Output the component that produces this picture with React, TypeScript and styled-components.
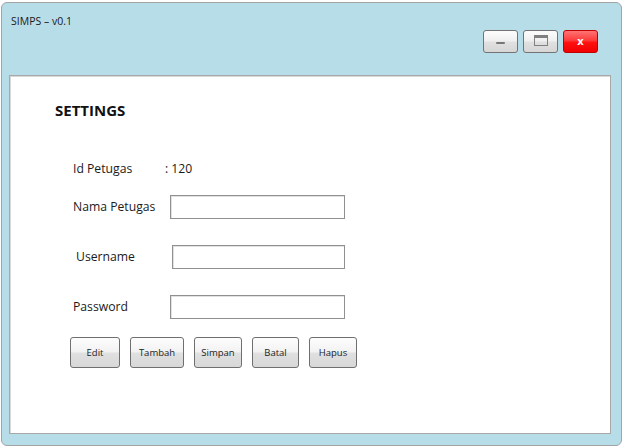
import * as React from 'react';
import styled, { createGlobalStyle } from 'styled-components';

const GlobalStyle = createGlobalStyle`
  html, body {
    margin: 0;
    padding: 0;
    background: #ffffff;
  }
  body {
    font-family: "Open Sans", "Liberation Sans", sans-serif;
    color: #1a1a1a;
  }
`;

export default function App() {
  return (
    <>
      <GlobalStyle />
      <Window>
        <TitleBar>
          <Title>SIMPS – v0.1</Title>
          <Controls>
            <WinButton aria-label="minimize">
              <MinBar />
            </WinButton>
            <WinButton aria-label="maximize">
              <svg width="14" height="11" viewBox="0 0 14 11">
                <rect x="0.5" y="0.5" width="13" height="10" fill="none" stroke="#808080" />
                <rect x="0.5" y="0.5" width="13" height="2.5" fill="#808080" />
              </svg>
            </WinButton>
            <WinButton $danger aria-label="close">x</WinButton>
          </Controls>
        </TitleBar>

        <Panel>
          <Heading>SETTINGS</Heading>
          <Form>
            <Row $indent={63}>
              <Label $width={92}>Id Petugas</Label>
              <Value>: 120</Value>
            </Row>
            <Row $indent={63} $gap={14}>
              <Label $width={97}>Nama Petugas</Label>
              <Field $width={175} />
            </Row>
            <Row $indent={66} $gap={26}>
              <Label $width={96}>Username</Label>
              <Field $width={173} />
            </Row>
            <Row $indent={63} $gap={26}>
              <Label $width={97}>Password</Label>
              <Field $width={175} type="password" />
            </Row>
          </Form>
          <Actions>
            <ActionButton $width={50}>Edit</ActionButton>
            <ActionButton $width={54}>Tambah</ActionButton>
            <ActionButton $width={48}>Simpan</ActionButton>
            <ActionButton $width={47}>Batal</ActionButton>
            <ActionButton $width={48}>Hapus</ActionButton>
          </Actions>
        </Panel>
      </Window>
    </>
  );
}

const Window = styled.div`
  margin: 2px 1px 1px 1px;
  width: 621px;
  height: 444px;
  box-sizing: border-box;
  border: 1px solid #a4a4a4;
  border-radius: 6px;
  background: #b7dde8;
  display: flex;
  flex-direction: column;
`;

const TitleBar = styled.div`
  height: 72px;
  display: flex;
  justify-content: space-between;
  align-items: flex-start;
  padding: 0 23px 0 9px;
`;

const Title = styled.div`
  margin-top: 11px;
  font-size: 10.5px;
  line-height: 14px;
  color: #1a1a1a;
`;

const Controls = styled.div`
  margin-top: 27px;
  display: flex;
  gap: 5px;
`;

const WinButton = styled.button<{ $danger?: boolean }>`
  width: 35px;
  height: 23px;
  box-sizing: border-box;
  padding: 0 0 2px 0;
  display: flex;
  align-items: center;
  justify-content: center;
  border-radius: 3px;
  border: 1px solid ${(p) => (p.$danger ? '#c00000' : '#737373')};
  background: ${(p) =>
    p.$danger
      ? 'linear-gradient(#ff7474, #ff3a3a 45%, #ff1010 55%, #f00000)'
      : 'linear-gradient(#fdfdfd, #f0f0f0 45%, #e0e0e0 55%, #d6d6d6)'};
  color: #ffffff;
  font-family: "Open Sans", "Liberation Sans", sans-serif;
  font-weight: 700;
  font-size: 11px;
  line-height: 1;
`;

const MinBar = styled.span`
  display: block;
  width: 9px;
  height: 2px;
  margin-top: 4px;
  background: #777777;
  border-radius: 1px;
`;

const Panel = styled.div`
  flex: 1;
  margin: 0 10px 11px 7px;
  box-sizing: border-box;
  background: #ffffff;
  border: 1px solid #a8a8a8;
  box-shadow: inset 1px 1px 0 #d8d8d8;
  padding: 24px 0 0 0;
  display: flex;
  flex-direction: column;
`;

const Heading = styled.h1`
  margin: 0 0 0 45px;
  font-size: 15px;
  line-height: 20px;
  font-weight: 700;
  color: #111111;
`;

const Form = styled.div`
  margin-top: 37px;
  display: flex;
  flex-direction: column;
`;

const Row = styled.div<{ $indent: number; $gap?: number }>`
  display: flex;
  align-items: center;
  height: 24px;
  margin-left: ${(p) => p.$indent}px;
  margin-top: ${(p) => p.$gap ?? 0}px;
`;

const Label = styled.span<{ $width: number }>`
  width: ${(p) => p.$width}px;
  font-size: 12.2px;
  line-height: 24px;
  color: #1a1a1a;
`;

const Value = styled.span`
  font-size: 12.2px;
  line-height: 24px;
  color: #1a1a1a;
`;

const Field = styled.input<{ $width: number }>`
  width: ${(p) => p.$width}px;
  height: 24px;
  box-sizing: border-box;
  margin: 0;
  border: 1px solid #909090;
  box-shadow: inset 1px 1px 0 #e2e2e2;
  background: #ffffff;
  outline: none;
  padding: 0 4px;
`;

const Actions = styled.div`
  margin: 18px 0 0 60px;
  display: flex;
  gap: 10px;
`;

const ActionButton = styled.button<{ $width: number }>`
  width: ${(p) => p.$width}px;
  height: 31px;
  box-sizing: border-box;
  padding: 0;
  border: 1px solid #6f6f6f;
  border-radius: 3px;
  background: linear-gradient(#fdfdfd, #f2f2f2 48%, #e0e0e0 52%, #d8d8d8);
  font-family: "Open Sans", "Liberation Sans", sans-serif;
  font-size: 9.5px;
  color: #222222;
`;
